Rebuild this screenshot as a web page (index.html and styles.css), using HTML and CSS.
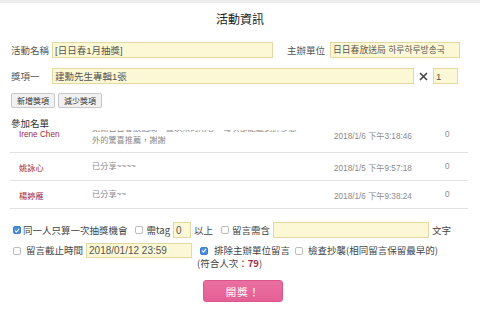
FILE: index.html
```html
<!DOCTYPE html>
<html lang="zh-Hant">
  <head>
    <meta charset="UTF-8" />
    <meta name="viewport" content="width=device-width, initial-scale=1.0" />
    <title>活動資訊</title>
    <link rel="stylesheet" href="styles.css">
  </head>
  <body>
    <div class="modal">
      <h2 class="title">活動資訊</h2>

      <div class="row">
        <label class="label">活動名稱</label>
        <input class="field field-name" type="text" value="[日日春1月抽獎]" />
        <label class="label-host">主辦單位</label>
        <input class="field field-host" type="text" value="日日春放送局 하루하루방송국" />
      </div>

      <div class="row row-prize">
        <label class="label">獎項一</label>
        <input class="field field-prize" type="text" value="建勳先生專輯1張" />
        <svg class="times" width="9" height="9" viewBox="0 0 9 9">
          <path d="M1 1 L8 8 M8 1 L1 8" stroke="#444" stroke-width="1.6" />
        </svg>
        <input class="field field-count" type="text" value="1" />
      </div>

      <div class="row row-buttons">
        <button class="small-btn">新增獎項</button>
        <button class="small-btn">減少獎項</button>
      </div>

      <div class="list-title">參加名單</div>
      <div class="list">
        <div class="list-inner">
          <div class="entry entry-tall">
            <span class="name">Irene Chen</span>
            <span class="msg">謝謝日日春放送局一直以來的用心，每次都能聽到許多意<br />外的驚喜推薦，謝謝</span>
            <span class="date">2018/1/6 下午3:18:46</span>
            <span class="count">0</span>
          </div>
          <div class="entry">
            <span class="name">姚詠心</span>
            <span class="msg">已分享~~~~</span>
            <span class="date">2018/1/5 下午9:57:18</span>
            <span class="count">0</span>
          </div>
          <div class="entry">
            <span class="name">楊婷雁</span>
            <span class="msg">已分享~~</span>
            <span class="date">2018/1/6 下午9:38:24</span>
            <span class="count">0</span>
          </div>
        </div>
      </div>

      <div class="options">
        <div class="opt-row opt-row-a">
          <span class="check checked">
            <svg width="7" height="7" viewBox="0 0 7 7"><path d="M1.2 3.6 L2.9 5.2 L5.9 1.6" fill="none" stroke="#fff" stroke-width="1.2" /></svg>
          </span>
          <span class="opt-text opt-once">同一人只算一次抽獎機會</span>
          <span class="check opt-tag-check"></span>
          <span class="opt-text opt-tag">需tag</span>
          <input class="field field-tag" type="text" value="0" />
          <span class="opt-text opt-after">以上</span>
          <span class="check opt-word-check"></span>
          <span class="opt-text opt-word">留言需含</span>
          <input class="field field-word" type="text" value="" />
          <span class="opt-text opt-after">文字</span>
        </div>

        <div class="opt-row opt-row-b">
          <span class="check"></span>
          <span class="opt-text opt-deadline">留言截止時間</span>
          <input class="field field-date" type="text" value="2018/01/12 23:59" />
          <div class="opt-group">
            <div class="opt-line">
              <span class="check checked">
                <svg width="7" height="7" viewBox="0 0 7 7"><path d="M1.2 3.6 L2.9 5.2 L5.9 1.6" fill="none" stroke="#fff" stroke-width="1.2" /></svg>
              </span>
              <span class="opt-text">排除主辦單位留言</span>
            </div>
            <div class="opt-total">(符合人次：<b>79</b>)</div>
          </div>
          <div class="opt-line opt-copy">
            <span class="check"></span>
            <span class="opt-text">檢查抄襲(相同留言保留最早的)</span>
          </div>
        </div>
      </div>

      <div class="actions">
        <button class="draw-btn">開獎！</button>
      </div>
    </div>
  </body>
</html>
```

FILE: styles.css
```css
* {
  margin: 0;
  padding: 0;
  box-sizing: border-box;
}
body {
  font-family: "Liberation Sans", "Noto Sans CJK TC", "Noto Sans CJK KR", sans-serif;
  background: #fff;
  border-top: 3px solid #ededed;
  width: 480px;
  height: 310px;
  overflow: hidden;
  color: #444;
}
.modal {
  padding: 0 10px;
}
.title {
  margin-top: 5px;
  height: 24px;
  line-height: 24px;
  text-align: center;
  font-size: 12px;
  font-weight: normal;
  color: #222;
}
.row {
  display: flex;
  align-items: center;
  margin-top: 9px;
  height: 17px;
}
.row-prize {
  margin-top: 10px;
  height: 16px;
}
.label {
  width: 42px;
  font-size: 9.5px;
  color: #555;
  padding-left: 1px;
}
.label-host {
  font-size: 9.5px;
  color: #555;
  margin-left: 14px;
  width: 43px;
}
.field {
  height: 16px;
  border: 1px solid #e2d9a2;
  background: #fcf8d6;
  font-family: "Liberation Sans", "Noto Sans CJK TC", "Noto Sans CJK KR", sans-serif;
  font-size: 9.5px;
  color: #555;
  padding: 0 2px;
  outline: none;
  flex-shrink: 0;
}
.field-name {
  width: 221px;
}
.field-host {
  width: 130px;
  font-size: 8.8px;
}
.field-prize {
  width: 362px;
}
.times {
  margin: 0 5px 0 5px;
}
.field-count {
  width: 25px;
}
.row-buttons {
  margin-top: 9px;
  height: 15px;
  gap: 3px;
  padding-left: 1px;
}
.small-btn {
  height: 15px;
  padding: 0 5px;
  font-family: "Noto Sans CJK TC", sans-serif;
  font-size: 8px;
  line-height: 13px;
  color: #333;
  background: #f1f1f1;
  border: 1px solid #c9c9c9;
  border-radius: 2px;
}
.list-title {
  margin-top: 10px;
  height: 12px;
  line-height: 12px;
  font-size: 9.5px;
  color: #333;
  padding-left: 1px;
}
.list {
  height: 82px;
  overflow: hidden;
  margin-right: 2px;
}
.list-inner {
  margin-top: -13px;
}
.entry {
  display: grid;
  grid-template-columns: 73px 242px 111px 1fr;
  align-items: center;
  height: 28px;
  padding-left: 9px;
  border-bottom: 1px solid #e2e2e2;
  font-size: 8.2px;
  color: #8a8a8a;
}
.entry-tall {
  height: 36px;
}
.name {
  color: #a3283f;
}
.msg {
  line-height: 12px;
}
.options {
  margin-top: 10px;
}
.opt-row {
  display: flex;
  align-items: center;
}
.opt-row-a {
  height: 16px;
}
.opt-row-b {
  margin-top: 5px;
  align-items: flex-start;
}
.check {
  display: inline-flex;
  align-items: center;
  justify-content: center;
  width: 8px;
  height: 8px;
  border: 1px solid #bcbcbc;
  border-radius: 2px;
  background: #fff;
  flex-shrink: 0;
  margin-left: 3px;
}
.check.checked {
  background: #4a8fdc;
  border-color: #3b7ecb;
}
.opt-text {
  font-family: "Noto Sans CJK TC", sans-serif;
  font-size: 9.5px;
  line-height: 15px;
  color: #444;
  margin-left: 5px;
  white-space: nowrap;
  flex-shrink: 0;
}
.opt-once {
  margin-left: 2px;
}
.opt-tag-check {
  margin-left: 7px;
}
.opt-tag {
  margin-left: 4px;
}
.field-tag {
  width: 18px;
  margin-left: 3px;
  font-size: 10px;
}
.opt-after {
  margin-left: 3px;
}
.opt-word-check {
  margin-left: 8px;
}
.opt-word {
  margin-left: 3px;
}
.field-word {
  width: 156px;
  margin-left: 3px;
}
.opt-row-b > .check {
  margin-top: 3.5px;
}
.opt-deadline {
  margin-left: 5px;
}
.field-date {
  width: 106px;
  height: 15px;
  margin-left: 3px;
  font-size: 10px;
}
.opt-group {
  margin-left: 5px;
}
.opt-line {
  display: flex;
  align-items: center;
  height: 15px;
}
.opt-group .check {
  margin-left: 3px;
}
.opt-group .opt-text {
  margin-left: 6px;
}
.opt-total {
  font-family: "Noto Sans CJK TC", sans-serif;
  font-size: 9.5px;
  line-height: 10px;
  color: #444;
}
.opt-total b {
  color: #a3283f;
}
.opt-copy {
  margin-left: 2px;
}
.actions {
  display: flex;
  justify-content: center;
  margin-top: 12px;
  padding-left: 6px;
}
.draw-btn {
  width: 80px;
  height: 22px;
  background: linear-gradient(#eb6fa1, #e45f94);
  border: 1px solid #d9558a;
  border-radius: 3px;
  color: #fff;
  font-family: "Noto Sans CJK TC", sans-serif;
  font-size: 10.5px;
  letter-spacing: 1px;
}
```
